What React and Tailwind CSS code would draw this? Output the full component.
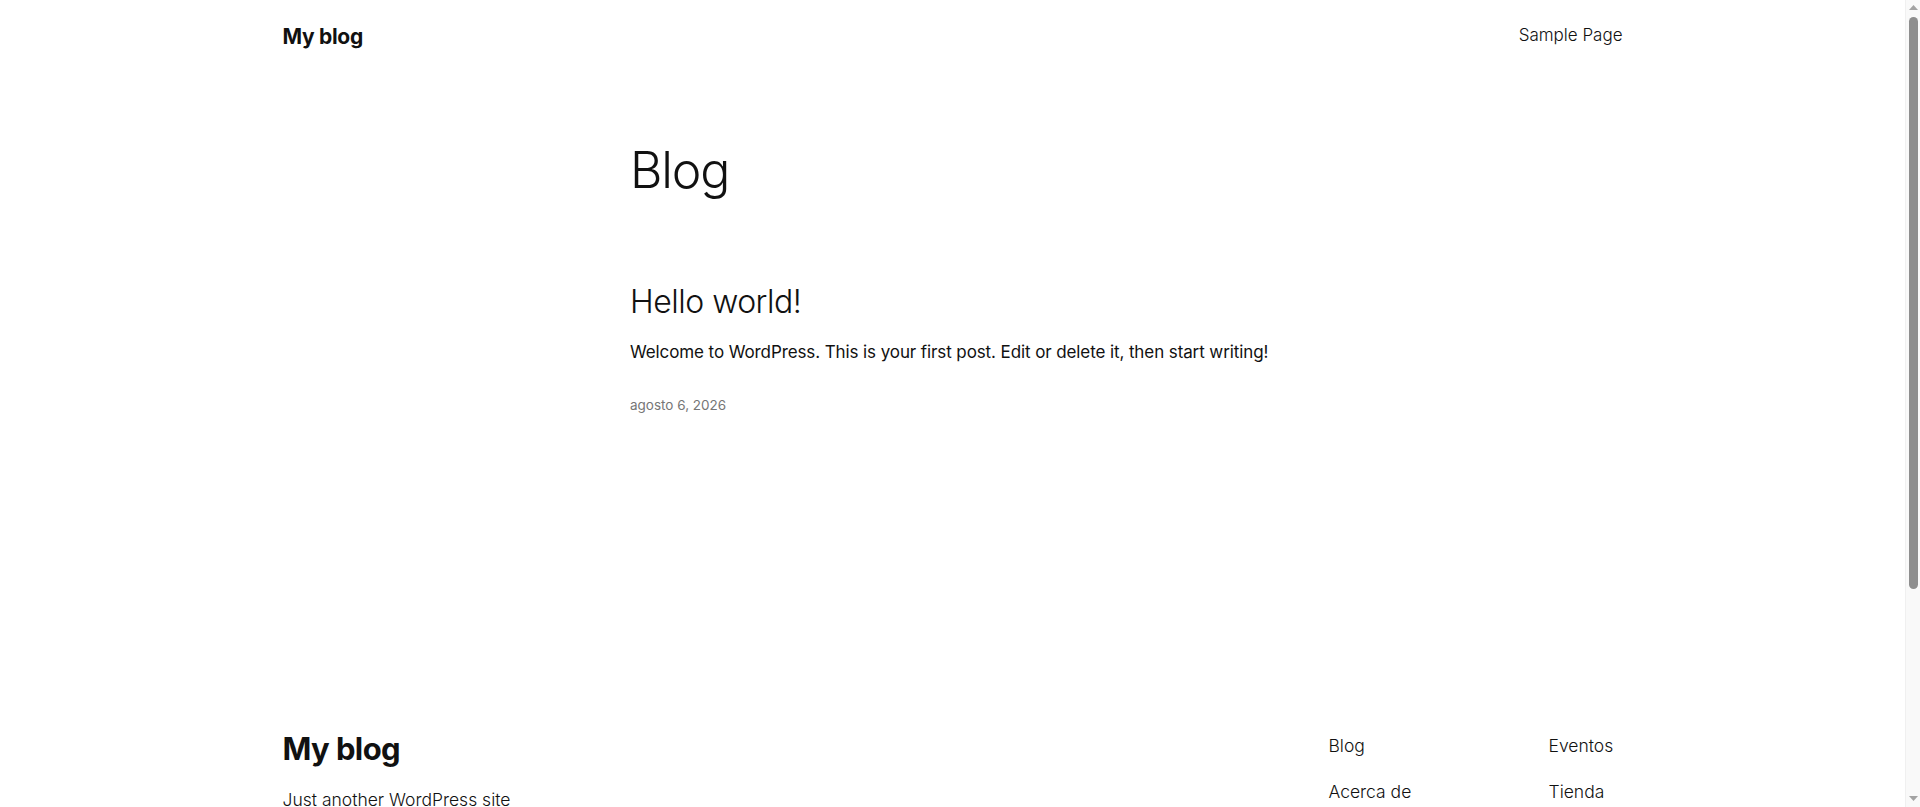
export default function App() {
  const font = { fontFamily: 'Inter, "Noto Sans", sans-serif' };

  return (
    <div className="h-screen flex bg-white text-[#111111]" style={font}>
      <div className="flex-1 min-w-0 overflow-hidden">
        <header className="max-w-[1340px] mx-auto h-[72px] flex items-center justify-between">
          <a href="#" className="text-[21px] font-bold tracking-[-0.3px] leading-none">My blog</a>
          <nav>
            <a href="#" className="text-[17px] font-light">Sample Page</a>
          </nav>
        </header>

        <main className="max-w-[645px] mx-auto pt-[68px]">
          <h1 className="text-[50px] font-light leading-[1.2] tracking-[-1.2px]">Blog</h1>

          <article className="mt-[83px]">
            <h2 className="text-[32px] font-light leading-[1.2] tracking-[-0.5px]">
              <a href="#">Hello world!</a>
            </h2>
            <p className="mt-[17px] text-[17px] font-normal leading-[1.7] tracking-[-0.1px]">
              Welcome to WordPress. This is your first post. Edit or delete it, then start writing!
            </p>
            <div className="mt-[28px] text-[13.5px] leading-[1.5] text-[#767676]">agosto 6, 2026</div>
          </article>
        </main>

        <footer className="max-w-[1340px] mx-auto mt-[314px] flex justify-between">
          <div>
            <div className="text-[31px] font-bold leading-[1.2] tracking-[-0.6px]">My blog</div>
            <p className="mt-[20px] text-[17.5px] font-light leading-[1.5]">Just another WordPress site</p>
          </div>
          <div className="w-[294px] pt-[2px] grid grid-cols-[220px_1fr] text-[17.5px] font-light leading-[1.6]">
            <div className="flex flex-col gap-[18px]">
              <a href="#">Blog</a>
              <a href="#">Acerca de</a>
            </div>
            <div className="flex flex-col gap-[18px]">
              <a href="#">Eventos</a>
              <a href="#">Tienda</a>
            </div>
          </div>
        </footer>
      </div>

      {/* browser scrollbar */}
      <aside className="w-[15px] shrink-0 bg-[#f9f9f9] border-l border-[#f0f0f0] flex flex-col items-center">
        <svg width="9" height="5" viewBox="0 0 9 5" className="mt-[5px]">
          <polygon points="0,5 4.5,0 9,5" fill="#a3a3a3" />
        </svg>
        <div className="mt-[7px] w-[9px] h-[572px] rounded-full bg-[#8e8e8e]" />
        <div className="flex-1" />
        <svg width="9" height="5" viewBox="0 0 9 5" className="mb-[6px]">
          <polygon points="0,0 9,0 4.5,5" fill="#a3a3a3" />
        </svg>
      </aside>
    </div>
  );
}
